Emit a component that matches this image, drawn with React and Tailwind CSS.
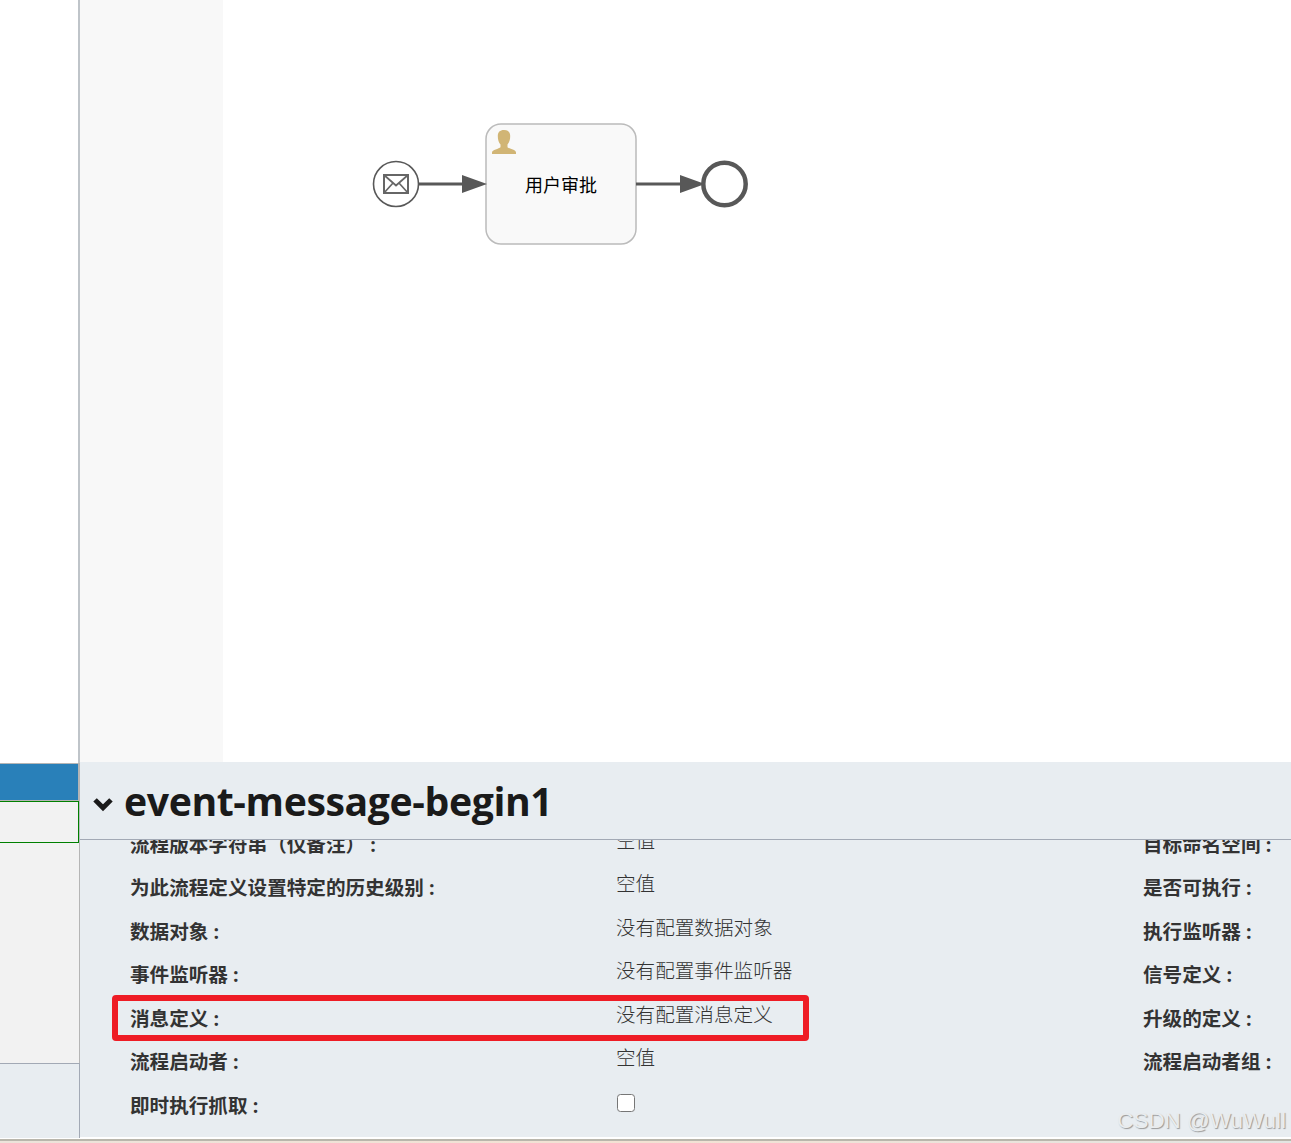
import React, { useState } from 'react';

const properties = [
  { label: '流程版本字符串（仅备注）', value: '空值', side: '目标命名空间' },
  { label: '为此流程定义设置特定的历史级别', value: '空值', side: '是否可执行' },
  { label: '数据对象', value: '没有配置数据对象', side: '执行监听器' },
  { label: '事件监听器', value: '没有配置事件监听器', side: '信号定义' },
  { label: '消息定义', value: '没有配置消息定义', side: '升级的定义', highlight: true },
  { label: '流程启动者', value: '空值', side: '流程启动者组' },
  { label: '即时执行抓取', checkbox: true },
];

const Diagram = () => (
  <svg width="1068" height="762" viewBox="223 0 1068 762" className="block">
    {/* message start event */}
    <circle cx="396" cy="184" r="22.5" fill="#fff" stroke="#585858" strokeWidth="1.6" />
    <g fill="none" stroke="#666" strokeWidth="2">
      <rect x="384" y="175" width="24" height="18" />
      <path d="M384 175l12 10.5L408 175M384 193l9-10M408 193l-9-10" strokeWidth="1.7" />
    </g>

    {/* user task */}
    <rect x="486" y="124" width="150" height="120" rx="15" fill="#f9f9f9" stroke="#bbb" strokeWidth="1.5" />
    <path
      d="M504 130c-4.200 0-6.200 2.300-6.200 6 0 4 1 6.600 2.700 8.400v2.800c-1.500 1.700-8.500 2.300-8.500 5.300v1.500h24v-1.500c0-3-7-3.600-8.500-5.300v-2.800c1.700-1.800 2.700-4.400 2.700-8.400 0-3.700-2-6-6.200-6z"
      fill="#d1b575"
    />
    <text x="525" y="192" fontSize="18" fill="#000">
      用户审批
    </text>

    {/* sequence flows */}
    <path d="M419 184h45M636 184h45" stroke="#585858" strokeWidth="3" />
    <path d="M462 175l25 9-25 9zM680 175l25 9-25 9z" fill="#585858" />

    {/* end event */}
    <circle cx="724.5" cy="184" r="21.2" fill="#fff" stroke="#585858" strokeWidth="4.5" />
  </svg>
);

const Sidebar = () => (
  <div className="flex w-[80px] shrink-0 flex-col">
    <div className="h-[763px] border-r-2 border-[#bfc4c9] bg-white" />
    <div className="h-[38px] border-y border-r-2 border-[#b5b5b5] bg-[#2980b9]" />
    <div className="bg-[#b9bcc0] pr-px">
      <div className="h-[42px] border border-l-0 border-[#008000] bg-[#f2f2f2]" />
    </div>
    <div className="h-[220px] border-r border-[#b5b5b5] bg-[#f2f2f2]" />
    <div className="h-[75px] border-t border-r border-[#a2a9b5] bg-[#e8edf1]" />
  </div>
);

const PropertyRow = ({ label, value, side, checkbox, highlight }) => {
  const [checked, setChecked] = useState(false);

  return (
    <div className="relative flex h-[43.5px] shrink-0 items-center pl-[50px]">
      <div className="w-[486px] shrink-0 pt-[2px] font-bold">{label} :</div>
      <div className="w-[527px] shrink-0">
        {checkbox ? (
          <input
            type="checkbox"
            checked={checked}
            onChange={(e) => setChecked(e.target.checked)}
            className="-mt-1 ml-px block size-[18px] appearance-none rounded-[3.5px] border-[1.5px] border-[#767676] bg-white"
          />
        ) : (
          <div className="pb-[6px] font-light">{value}</div>
        )}
      </div>
      {side && <div className="pt-[2px] font-bold whitespace-nowrap">{side} :</div>}
      {highlight && (
        <div className="absolute top-[-1px] left-[32px] h-[46px] w-[697px] rounded-[4px] border-[6px] border-[#ee1c25]" />
      )}
    </div>
  );
};

const App = () => {
  return (
    <div className="relative flex h-[1143px] w-[1291px] flex-col overflow-hidden bg-white font-['Open_Sans','Noto_Sans_CJK_SC',sans-serif] text-[#333]">
      <div className="flex h-[1138px] shrink-0">
        <Sidebar />
        <div className="flex w-[1211px] flex-col">
          <div className="flex h-[762px] shrink-0">
            <div className="w-[143px] bg-[#f8f8f8]" />
            <Diagram />
          </div>

          <div className="flex h-[78px] shrink-0 items-center border-b border-[#a2a9b5] bg-[#e8edf1]">
            <svg width="20" height="14" viewBox="0 0 20 14" className="mt-2 ml-[13px] shrink-0">
              <path d="M0.3 3.6L3.8 0.3 10 6.200l6.200-5.900 3.500 3.300L10 13.300z" fill="#1a1a1a" />
            </svg>
            <h1 className="ml-[11px] text-[39.2px] leading-none font-bold tracking-[-0.4px] text-[#1a1a1a]">
              event-message-begin1
            </h1>
          </div>

          <div className="flex h-[297px] shrink-0 flex-col overflow-hidden bg-[#e8edf1] text-[19.6px] leading-[28px]">
            <div className="-mt-[18px] flex flex-col">
              {properties.map((item) => (
                <PropertyRow key={item.label} {...item} />
              ))}
            </div>
          </div>
        </div>
      </div>
      <div className="mt-px h-[2px] shrink-0 bg-[#b9b6ac]" />
      <div className="h-[2px] shrink-0 bg-linear-to-r from-[#ece3da] via-[#f3e2d3] to-[#e3e5e2]" />
      <div className="absolute right-[5px] bottom-[8px] font-['Liberation_Sans',sans-serif] text-[22.4px] leading-[28px] text-[#e9ecee] [text-shadow:1px_1px_1px_#999]">
        CSDN @WuWull
      </div>
    </div>
  );
};

export default App;
